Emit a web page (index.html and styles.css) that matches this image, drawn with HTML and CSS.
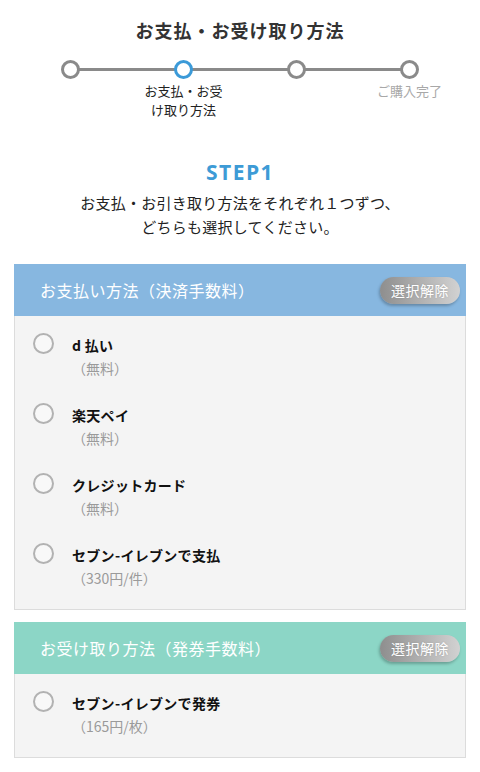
FILE: index.html
```html
<!DOCTYPE html>
<html lang="ja">
<head>
<meta charset="utf-8">
<title>お支払・お受け取り方法</title>
<link rel="stylesheet" href="styles.css">
</head>
<body>
<main class="page">
  <h1 class="title">お支払・お受け取り方法</h1>

  <ol class="stepper">
    <li class="step"><span class="dot"></span></li>
    <li class="step step-active"><span class="dot"></span><span class="step-label">お支払・お受け取り方法</span></li>
    <li class="step"><span class="dot"></span></li>
    <li class="step step-last"><span class="dot"></span><span class="step-label step-label-muted">ご購入完了</span></li>
  </ol>

  <h2 class="step-heading">STEP1</h2>
  <p class="lead">お支払・お引き取り方法をそれぞれ１つずつ、<br>どちらも選択してください。</p>

  <section class="card card-pay">
    <div class="card-head">
      <h3 class="card-title">お支払い方法（決済手数料）</h3>
      <button class="clear-btn" type="button">選択解除</button>
    </div>
    <ul class="card-body">
      <li class="option"><span class="radio"></span><div class="option-text"><span class="option-name">d 払い</span><span class="option-fee">（無料）</span></div></li>
      <li class="option"><span class="radio"></span><div class="option-text"><span class="option-name">楽天ペイ</span><span class="option-fee">（無料）</span></div></li>
      <li class="option"><span class="radio"></span><div class="option-text"><span class="option-name">クレジットカード</span><span class="option-fee">（無料）</span></div></li>
      <li class="option"><span class="radio"></span><div class="option-text"><span class="option-name">セブン-イレブンで支払</span><span class="option-fee">（330円/件）</span></div></li>
    </ul>
  </section>

  <section class="card card-receive">
    <div class="card-head">
      <h3 class="card-title">お受け取り方法（発券手数料）</h3>
      <button class="clear-btn" type="button">選択解除</button>
    </div>
    <ul class="card-body">
      <li class="option"><span class="radio"></span><div class="option-text"><span class="option-name">セブン-イレブンで発券</span><span class="option-fee">（165円/枚）</span></div></li>
    </ul>
  </section>
</main>
</body>
</html>
```

FILE: styles.css
```css
* { box-sizing: border-box; }

html, body {
  margin: 0;
  padding: 0;
  background: #fff;
}

body {
  font-family: "Noto Sans CJK JP", "Noto Sans", sans-serif;
  color: #222;
  width: 480px;
}

.page {
  padding: 17px 14px 0;
}

.title {
  margin: 0;
  text-align: center;
  font-size: 18px;
  line-height: 27px;
  font-weight: 700;
  color: #333;
  letter-spacing: 1px;
}

.stepper {
  list-style: none;
  margin: 16px 0 0;
  padding: 0;
  display: grid;
  grid-template-columns: repeat(4, 1fr);
  height: 60px;
}

.step {
  position: relative;
  display: flex;
  flex-direction: column;
  align-items: center;
}

.step::after {
  content: "";
  position: absolute;
  left: 50%;
  width: 100%;
  top: 8px;
  height: 3px;
  background: #8a8a8a;
  z-index: 0;
}

.step-last::after { display: none; }

.dot {
  position: relative;
  z-index: 1;
  width: 19px;
  height: 19px;
  border-radius: 50%;
  border: 3px solid #8a8a8a;
  background: #fff;
}

.step-active .dot {
  border-color: #3b9ad8;
}

.step-label {
  margin-top: 2px;
  width: 84px;
  text-align: center;
  font-size: 13px;
  line-height: 19px;
  color: #222;
}

.step-label-muted {
  color: #a8a8a8;
}

.step-heading {
  margin: 38px 0 0;
  text-align: center;
  font-family: "Open Sans", "Lato", sans-serif;
  font-weight: 700;
  font-size: 21px;
  line-height: 28px;
  letter-spacing: 1.5px;
  color: #3d9bd6;
}

.lead {
  margin: 5px 0 0;
  text-align: center;
  font-size: 15px;
  line-height: 24px;
  color: #222;
  letter-spacing: 0.25px;
}

.card {
  margin-top: 25px;
  border: 1px solid #dcdcdc;
  border-top: none;
  background: #f4f4f4;
}

.card + .card {
  margin-top: 12px;
}

.card-head {
  display: flex;
  align-items: center;
  justify-content: space-between;
  height: 52px;
  margin: 0 -1px;
  padding: 0 6px 0 26px;
}

.card-pay .card-head { background: #87b7e0; }
.card-receive .card-head { background: #8cd6c6; }

.card-title {
  margin: 0;
  font-size: 16px;
  font-weight: 400;
  color: #fff;
  letter-spacing: 0.5px;
}

.clear-btn {
  width: 80px;
  height: 27px;
  border: none;
  border-radius: 14px;
  padding: 0;
  background: linear-gradient(to right, #8e8e8e, #d2d2d2);
  box-shadow: -1px 2px 3px rgba(0, 0, 0, 0.25);
  color: #fff;
  font-family: "Noto Sans CJK JP", sans-serif;
  font-size: 14px;
  letter-spacing: 0.5px;
  text-shadow: 0 0 2px rgba(0, 0, 0, 0.15);
}

.card-body {
  list-style: none;
  margin: 0;
  padding: 18px 0 19px 18px;
  display: flex;
  flex-direction: column;
  gap: 24px;
}

.option {
  display: flex;
  align-items: flex-start;
  gap: 18px;
}

.radio {
  flex: none;
  width: 21px;
  height: 21px;
  margin-top: -1px;
  border-radius: 50%;
  border: 2px solid #b2b2b2;
  background: #f8f8f8;
}

.option-text {
  display: flex;
  flex-direction: column;
}

.option-name {
  font-size: 14px;
  line-height: 22px;
  font-weight: 700;
  color: #111;
  letter-spacing: 0.3px;
}

.option-fee {
  font-size: 14px;
  line-height: 24px;
  color: #9a9a9a;
}
```
